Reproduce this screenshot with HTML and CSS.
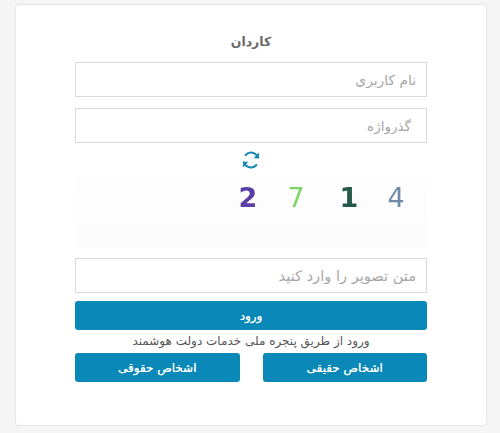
FILE: index.html
```html
<!DOCTYPE html>
<html lang="fa" dir="rtl">
<head>
<meta charset="utf-8">
<title>کاردان</title>
<link rel="stylesheet" href="styles.css">
</head>
<body>
<main class="card">
  <h1 class="title">کاردان</h1>
  <input class="field field-user" type="text" placeholder="نام کاربری">
  <input class="field field-pass" type="text" placeholder="گذرواژه">
  <div class="refresh">
    <svg width="20" height="20" viewBox="0 0 20 20" fill="none" stroke="#1a87b5" stroke-width="2" stroke-linecap="round" stroke-linejoin="round">
      <path d="M17 7.6A7.3 7.3 0 0 0 4.6 5"/>
      <path d="M18 2.6V8.2H12.6" stroke-width="0" fill="#1a87b5"/>
      <path d="M3 12.4A7.3 7.3 0 0 0 15.4 15"/>
      <path d="M2 17.4V11.8H7.4" stroke-width="0" fill="#1a87b5"/>
    </svg>
  </div>
  <div class="captcha" dir="ltr">
    <span class="digit d2">2</span>
    <span class="digit d7">7</span>
    <span class="digit d1">1</span>
    <span class="digit d4">4</span>
  </div>
  <input class="field field-captcha" type="text" placeholder="متن تصویر را وارد کنید">
  <button class="btn btn-login">ورود</button>
  <p class="note">ورود از طریق پنجره ملی خدمات دولت هوشمند</p>
  <div class="row">
    <button class="btn btn-half">اشخاص حقیقی</button>
    <button class="btn btn-half">اشخاص حقوقی</button>
  </div>
</main>
</body>
</html>
```

FILE: styles.css
```css
* { box-sizing: border-box; }
html, body { margin: 0; height: 433px; overflow: hidden; }
body {
  background: #f5f5f5;
  font-family: "DejaVu Sans", "Noto Sans", sans-serif;
  padding: 5px 14px 8px 16px;
}
.card {
  width: 470px;
  height: 420px;
  background: #fff;
  border-radius: 3px;
  box-shadow: 0 0 2px rgba(0,0,0,.22);
  padding: 26px 59px 0;
  display: flex;
  flex-direction: column;
}
.title {
  margin: 0 0 10px;
  height: 21px;
  line-height: 21px;
  font-size: 12.5px;
  font-weight: 700;
  color: #6a6a6a;
  text-align: center;
}
.field {
  display: block;
  width: 352px;
  height: 35px;
  border: 1px solid #d9d9d9;
  background: #fff;
  padding: 0 10px;
  font-family: "DejaVu Sans", sans-serif;
  outline: none;
  flex: none;
}
.field::placeholder { color: #a6a6a6; opacity: 1; }
.field-user { margin-bottom: 11px; font-size: 13.8px; }
.field-pass { margin-bottom: 6px; font-size: 13.5px; padding-right: 15px; }
.refresh { height: 22px; display: flex; justify-content: center; align-items: center; margin-bottom: 6px; flex: none; }
.captcha {
  height: 71px;
  flex: none;
  background: linear-gradient(#fefefe, #fcfcfc);
  margin-bottom: 10px;
  padding: 3px 0 0 163px;
  display: flex;
  font-family: "DejaVu Sans", sans-serif;
  font-size: 27px;
  line-height: 36px;
}
.digit { width: 20px; text-align: center; filter: blur(.5px); }
.d2 { color: #5a3ea5; font-weight: 700; }
.d7 { color: #7ed667; margin-left: 28px; }
.d1 { color: #27594a; margin-left: 33px; font-weight: 700; }
.d4 { color: #6f8aa8; margin-left: 27px; }
.btn {
  border: 0;
  border-radius: 3px;
  background: #0a89b8;
  color: #fff;
  font: 400 12px "DejaVu Sans", sans-serif;
  text-shadow: 0 0 .4px #fff;
  padding: 0;
  flex: none;
}
.field-captcha { margin-bottom: 8px; font-size: 14.6px; }
.btn-login { width: 352px; height: 29px; }
.note {
  margin: 0;
  height: 23px;
  line-height: 23px;
  text-align: center;
  font-size: 12px;
  color: #555;
  flex: none;
}
.row { display: flex; justify-content: space-between; }
.btn-half { width: 164.5px; height: 29px; }
```
